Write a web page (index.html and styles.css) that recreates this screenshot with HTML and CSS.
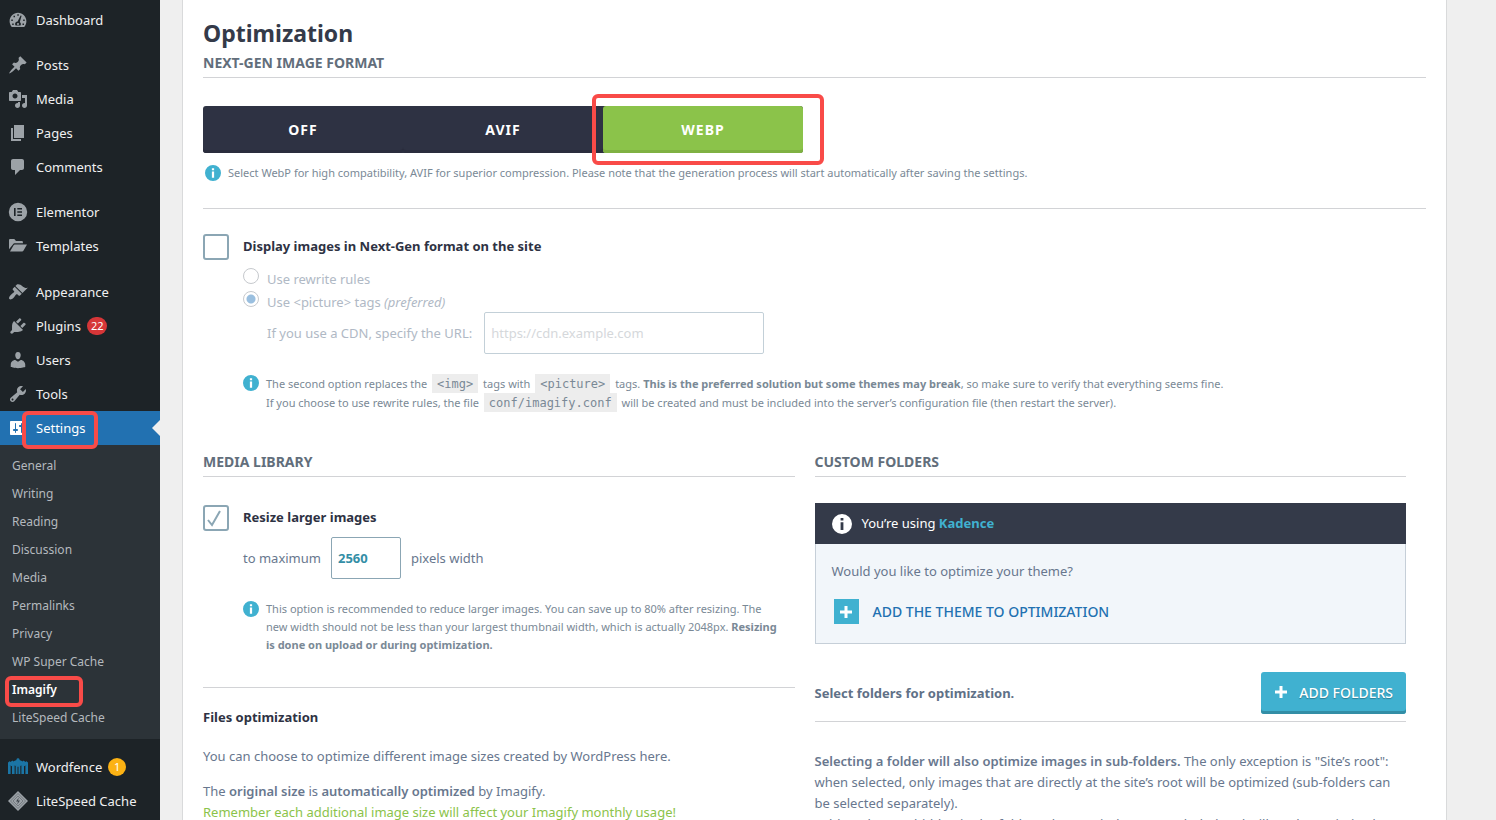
FILE: index.html
```html
<!DOCTYPE html>
<html lang="en">
<head>
<meta charset="utf-8">
<title>Imagify Settings</title>
<link rel="stylesheet" href="styles.css">
</head>
<body>
<svg class="sprite" aria-hidden="true">
  <symbol id="i-info" viewBox="0 0 20 20"><path fill-rule="evenodd" d="M10 0a10 10 0 1 0 0 20a10 10 0 0 0 0-20zM8.600 4h2.800v2.600H8.600zM8.600 8.200h2.800V16H8.600z"/></symbol>
  <symbol id="i-plus" viewBox="0 0 12 12"><path d="M4.500 0h3v4.500H12v3H7.500V12h-3V7.500H0v-3h4.500z"/></symbol>
</svg>
<div class="app">
  <nav class="sidebar" aria-label="Main menu">
    <ul class="menu">
      <li><a href="#"><svg viewBox="0 0 20 20"><path fill-rule="evenodd" d="M3.760 17h12.480c1.340-1.540 2.160-3.550 2.160-5.750C18.400 6.410 14.640 2.700 10 2.700S1.600 6.410 1.600 11.250c0 2.200.820 4.210 2.160 5.750zM9.300 4.200h1.500v1.500H9.300zM5.500 5.700H7v1.500H5.500zM3.300 9.500h1.500V11H3.300zM15.200 9.500h1.500V11h-1.500zM4.200 13.500h1.500V15H4.200zM14.500 13.500H16V15h-1.500zM13.600 5.800l-1.800 6.200c.700.500 1.100 1.200 1.100 2.100 0 .600-.200 1.100-.500 1.500H7.600c-.300-.400-.500-.900-.500-1.500 0-1.400 1.100-2.500 2.500-2.600l3-6.100zM10 13.100a1 1 0 1 0 0 2a1 1 0 0 0 0-2z"/></svg>Dashboard</a></li>
    </ul>
    <ul class="menu">
      <li><a href="#"><svg viewBox="0 0 20 20"><path d="M10.440 3.020l1.820-1.820 6.360 6.350-1.830 1.820c-1.050-.680-2.480-.570-3.410.360l-.750.750c-.920.930-1.040 2.350-.350 3.410l-1.830 1.820-2.410-2.410-2.800 2.790c-.420.420-3.380 2.710-3.800 2.290s1.860-3.390 2.280-3.810l2.790-2.790L4.100 9.360l1.830-1.820c1.050.690 2.480.570 3.400-.360l.750-.750c.930-.920 1.050-2.350.360-3.410z"/></svg>Posts</a></li>
      <li><a href="#"><svg viewBox="0 0 20 20"><path d="M13 11V4c0-.550-.450-1-1-1h-1.670L9 1H5L3.670 3H2c-.550 0-1 .450-1 1v7c0 .550.450 1 1 1h10c.550 0 1-.450 1-1zM7 4.500c1.380 0 2.500 1.120 2.500 2.500S8.380 9.500 7 9.500 4.500 8.380 4.500 7 5.620 4.500 7 4.500zM14 6h5v10.500c0 1.380-1.120 2.500-2.500 2.500S14 17.880 14 16.500s1.120-2.500 2.500-2.500c.170 0 .340.020.500.050V9h-3V6zm-4 8.050V13h2v3.500c0 1.380-1.120 2.500-2.500 2.500S7 17.880 7 16.500 8.120 14 9.500 14c.170 0 .340.020.500.050z"/></svg>Media</a></li>
      <li><a href="#"><svg viewBox="0 0 20 20"><path d="M6 15V2h10v13H6zm-1 1h8v2H3V5h2v11z"/></svg>Pages</a></li>
      <li><a href="#"><svg viewBox="0 0 20 20"><path d="M5 2h9c1.100 0 2 .900 2 2v7c0 1.100-.900 2-2 2h-2l-5 5v-5H5c-1.100 0-2-.900-2-2V4c0-1.100.900-2 2-2z"/></svg>Comments</a></li>
    </ul>
    <ul class="menu">
      <li><a href="#"><svg viewBox="0 0 20 20"><path fill-rule="evenodd" d="M10 .800a9.200 9.200 0 1 0 0 18.400a9.200 9.200 0 0 0 0-18.400zM6 6h1.600v8H6zM9.300 6H14v1.500H9.300zM9.300 9.200H14v1.500H9.300zM9.300 12.500H14V14H9.300z"/></svg>Elementor</a></li>
      <li><a href="#"><svg viewBox="0 0 20 20"><path d="M1 13.300V4.200c0-.800.500-1.300 1.300-1.300h4l1.700 2h5.700c.700 0 1.200.500 1.200 1.200v1.200H6.600c-.700 0-1.200.300-1.500.900zM2 15.600l3.600-6.400c.300-.500.700-.800 1.300-.800H19l-3.600 6.400c-.300.500-.700.800-1.300.800z"/></svg>Templates</a></li>
    </ul>
    <ul class="menu">
      <li><a href="#"><svg viewBox="0 0 20 20"><path d="M14.480 11.060L7.410 3.990l1.500-1.500c.500-.560 2.300-.470 3.510.320 1.210.800 1.430 1.280 2.910 2.100 1.180.640 2.450 1.260 4.450.850zm-.710.710L6.700 4.700 4.930 6.470c-.390.390-.390 1.020 0 1.410l1.060 1.060c.390.390.390 1.030 0 1.420-.600.600-1.430 1.110-2.210 1.690-.350.260-.700.530-1.010.840C1.430 14.230.400 16.080 1.400 17.070c.990 1 2.840-.030 4.180-1.360.310-.310.580-.660.850-1.020.570-.780 1.080-1.610 1.690-2.210.390-.390 1.020-.390 1.410 0l1.060 1.060c.390.390 1.020.390 1.410 0z"/></svg>Appearance</a></li>
      <li><a href="#"><svg viewBox="0 0 20 20"><path d="M13.110 4.360L9.870 7.600 8 5.730l3.240-3.240c.350-.340 1.050-.200 1.560.320.520.510.660 1.210.310 1.550zm-8 1.770l.910-1.120 9.010 9.010-1.190.840c-.710.710-2.630 1.160-3.820 1.160H6.140L4.900 17.260c-.590.590-1.540.590-2.120 0-.590-.580-.590-1.530 0-2.120l1.240-1.240v-3.880c0-1.130.400-3.190 1.090-3.890zm7.260 3.970l3.240-3.240c.340-.350 1.040-.210 1.550.310.520.510.660 1.210.310 1.550l-3.240 3.250z"/></svg>Plugins <span class="count count-red">22</span></a></li>
      <li><a href="#"><svg viewBox="0 0 20 20"><path d="M10 9.250c-2.270 0-2.730-3.440-2.730-3.440C7 4.020 7.820 2 9.970 2c2.160 0 2.980 2.020 2.710 3.810 0 0-.410 3.440-2.680 3.440zm0 2.570L12.720 10c2.390 0 4.520 2.330 4.520 4.530v2.490s-3.650 1.130-7.240 1.130c-3.650 0-7.240-1.130-7.240-1.130v-2.490c0-2.250 1.940-4.480 4.470-4.480z"/></svg>Users</a></li>
      <li><a href="#"><svg viewBox="0 0 20 20"><path d="M16.680 9.770c-1.340 1.340-3.300 1.670-4.950.990l-5.410 6.520c-.990.990-2.590.990-3.580 0s-.990-2.590 0-3.570l6.520-5.420c-.680-1.650-.350-3.610.990-4.950 1.280-1.280 3.120-1.620 4.720-1.060l-2.890 2.890 2.820 2.820 2.860-2.870c.530 1.580.180 3.390-1.080 4.650zM3.810 16.210c.400.390 1.040.390 1.430 0 .400-.400.400-1.040 0-1.430-.390-.400-1.030-.400-1.430 0-.390.390-.390 1.030 0 1.430z"/></svg>Tools</a></li>
      <li class="current"><a href="#"><svg viewBox="0 0 20 20"><path d="M18 16V4c0-.550-.450-1-1-1H3c-.550 0-1 .450-1 1v12c0 .550.450 1 1 1h14c.550 0 1-.450 1-1zM8 11h1c.550 0 1 .450 1 1s-.450 1-1 1H8v1.500c0 .280-.220.500-.500.500s-.500-.220-.500-.500V13H6c-.550 0-1-.450-1-1s.450-1 1-1h1V5.500c0-.280.220-.500.500-.500s.500.220.500.500V11zm5-2h-1c-.550 0-1-.450-1-1s.450-1 1-1h1V5.500c0-.280.220-.500.500-.500s.500.220.500.500V7h1c.550 0 1 .450 1 1s-.450 1-1 1h-1v5.500c0 .280-.220.500-.500.500s-.500-.220-.500-.500V9z"/></svg>Settings</a><span class="mark mark-settings"></span></li>
    </ul>
    <ul class="submenu">
      <li><a href="#">General</a></li>
      <li><a href="#">Writing</a></li>
      <li><a href="#">Reading</a></li>
      <li><a href="#">Discussion</a></li>
      <li><a href="#">Media</a></li>
      <li><a href="#">Permalinks</a></li>
      <li><a href="#">Privacy</a></li>
      <li><a href="#">WP Super Cache</a></li>
      <li class="active"><a href="#">Imagify</a><span class="mark mark-imagify"></span></li>
      <li><a href="#">LiteSpeed Cache</a></li>
    </ul>
    <ul class="menu">
      <li><a href="#"><svg class="wordfence" viewBox="0 0 20 20"><path d="M0 5.500L2 4v1l3-1.500v1L8.500 3V2L10 1l1.500 1v1L15 4.500v-1L18 5V4l2 1.500V8H0z"/><path d="M0 9h2.600v8H0zM4 9h2.600v8H4zM7.700 8.500h1.800V17H7.700zM10.500 8.500h1.800V17h-1.800zM13.400 9H16v8h-2.600zM17.400 9H20v8h-2.600zM0 7h20v2.500c-2-1.200-3.500-1-4.500.300-1-1.300-3-1.600-5.500-.100-2.500-1.500-4.500-1.200-5.500.100C3.500 8.500 2 8.300 0 9.500z"/></svg>Wordfence <span class="count count-amber">1</span></a></li>
      <li><a href="#"><svg viewBox="0 0 20 20"><path d="M10 0l10 10-10 10L0 10z"/><path class="facet" d="M10 2.500l7.500 7.500-7.500 7.500L2.500 10zM10 5l5 5-5 5-5-5z"/><path class="bolt" d="M10.800 6.500L8 10.500h2l-.800 3L12 9.500h-2z"/></svg>LiteSpeed Cache</a></li>
    </ul>
  </nav>

  <main class="content">
    <form class="panel">
      <h1>Optimization</h1>
      <h2>Next-Gen image format</h2>
      <div class="formats">
        <button type="button">Off</button>
        <button type="button">AVIF</button>
        <button type="button" class="selected">WebP</button>
        <span class="mark mark-webp"></span>
      </div>
      <p class="note format-note"><svg><use href="#i-info"/></svg><span>Select WebP for high compatibility, AVIF for superior compression. Please note that the generation process will start automatically after saving the settings.</span></p>

      <section class="option display-option">
        <input type="checkbox" id="nextgen">
        <div class="option-body">
          <label class="option-title" for="nextgen">Display images in Next-Gen format on the site</label>
          <div class="methods">
            <div class="radio-row"><input type="radio" name="method" id="rewrite" disabled><label for="rewrite">Use rewrite rules</label></div>
            <div class="radio-row"><input type="radio" name="method" id="picture" checked disabled><label for="picture">Use &lt;picture&gt; tags <em>(preferred)</em></label></div>
            <div class="cdn-row"><label for="cdn">If you use a CDN, specify the URL:</label><input type="text" id="cdn" placeholder="https://cdn.example.com" disabled></div>
          </div>
          <p class="note code-note"><svg><use href="#i-info"/></svg><span>The second option replaces the <code>&lt;img&gt;</code> tags with <code>&lt;picture&gt;</code> tags. <strong>This is the preferred solution but some themes may break</strong>, so make sure to verify that everything seems fine.<br>If you choose to use rewrite rules, the file <code>conf/imagify.conf</code> will be created and must be included into the server’s configuration file (then restart the server).</span></p>
        </div>
      </section>

      <div class="columns">
        <section>
          <h2>Media Library</h2>
          <div class="option resize-option">
            <input type="checkbox" id="resize" checked>
            <div class="option-body">
              <label class="option-title" for="resize">Resize larger images</label>
              <div class="size-row"><label for="width">to maximum</label><input type="text" id="width" value="2560"><span>pixels width</span></div>
              <p class="note resize-note"><svg><use href="#i-info"/></svg><span>This option is recommended to reduce larger images. You can save up to 80% after resizing. The new width should not be less than your largest thumbnail width, which is actually 2048px. <strong>Resizing is done on upload or during optimization.</strong></span></p>
            </div>
          </div>
          <div class="files">
            <h3>Files optimization</h3>
            <p class="intro">You can choose to optimize different image sizes created by WordPress here.</p>
            <p>The <strong>original size</strong> is <strong>automatically optimized</strong> by Imagify.<br><span class="reminder">Remember each additional image size will affect your Imagify monthly usage!</span></p>
          </div>
        </section>
        <section>
          <h2>Custom folders</h2>
          <div class="theme-box">
            <div class="theme-head"><svg><use href="#i-info"/></svg><span>You’re using <strong>Kadence</strong></span></div>
            <div class="theme-body">
              <p>Would you like to optimize your theme?</p>
              <button type="button" class="add-theme"><span class="plus-box"><svg><use href="#i-plus"/></svg></span>Add the theme to optimization</button>
            </div>
          </div>
          <div class="folders-row">
            <strong>Select folders for optimization.</strong>
            <button type="button" class="add-folders"><svg><use href="#i-plus"/></svg>Add folders</button>
          </div>
          <p class="folder-text"><strong>Selecting a folder will also optimize images in sub-folders.</strong> The only exception is "Site’s root": when selected, only images that are directly at the site’s root will be optimized (sub-folders can be selected separately).<br>Folders that are hidden in the folder selector window are excluded and will not be optimized even if a parent folder is selected.</p>
        </section>
      </div>
    </form>
  </main>
</div>
</body>
</html>
```
FILE: styles.css
```css
* { box-sizing: border-box; }
body {
  margin: 0;
  background: #efefef;
  color: #626e7b;
  font: 13px/21px "Segoe UI", "Noto Sans", sans-serif;
}
h1, h2, h3, p, ul { margin: 0; padding: 0; }
ul { list-style: none; }
a { color: inherit; text-decoration: none; }
button, input { font: inherit; margin: 0; }
button { border: 0; cursor: pointer; }
strong { font-weight: 600; }
.sprite { display: none; }
.app { display: flex; height: 100vh; overflow: hidden; }

/* Sidebar */
.sidebar { flex: 0 0 160px; background: #1d2327; padding-top: 3px; }
.menu { margin-bottom: 11px; color: #f0f0f1; }
.menu + .menu + .menu { margin-bottom: 12px; }
.menu li { position: relative; }
.menu a { display: flex; align-items: center; height: 34px; padding-left: 8px; }
.menu svg { width: 20px; height: 20px; margin-right: 8px; fill: #9ca2a7; }
.menu .wordfence { fill: #1b75a5; }
.menu .facet { fill: none; stroke: #6b7176; stroke-width: 0.8; }
.menu .bolt { fill: #3c434a; }
.menu .current { background: #2271b1; color: #fff; }
.menu .current svg { fill: #fff; }
.current::after {
  content: "";
  position: absolute;
  right: 0;
  top: 9px;
  border: 8px solid transparent;
  border-left: 0;
  border-right-color: #efefef;
}
.menu + .menu:has(.current) { margin-bottom: 0; }
.count {
  min-width: 18px;
  height: 18px;
  margin-left: 6px;
  padding: 0 4px;
  border-radius: 9px;
  color: #fff;
  font-size: 11px;
  line-height: 18px;
  text-align: center;
}
.count-red { background: #d63638; }
.count-amber { background: #fcb214; }
.submenu { background: #2c3338; margin-bottom: 11px; padding: 7px 0; color: #b4b9be; font-size: 12px; line-height: 28px; }
.submenu li { position: relative; padding-left: 12px; }
.submenu a { display: block; }
.submenu .active { color: #fff; font-weight: 600; }

/* Highlight frames over the controls */
.mark { position: absolute; border: 4px solid #f94b48; border-radius: 6px; pointer-events: none; z-index: 1; }
.mark-settings { left: 22px; top: 0; width: 76px; height: 38px; }
.mark-imagify { left: 5px; top: 0; width: 78px; height: 31px; }
.mark-webp { right: -21px; top: -12px; bottom: -12px; width: 232px; }

/* Panel */
.content { flex: 1; min-width: 0; padding: 0 49px 0 22px; }
.panel { min-height: 100%; padding: 17px 20px 0; background: #fff; border: solid #d9dadb; border-width: 0 1px; }
h1 { color: #343a49; font-size: 23px; line-height: 32px; font-weight: 700; }
h2 {
  padding: 4px 0;
  border-bottom: 1px solid #d2d3d6;
  color: #626e7b;
  font-size: 14px;
  line-height: 20px;
  font-weight: 700;
  text-transform: uppercase;
}
.formats { position: relative; display: flex; width: 600px; margin-top: 28px; border-radius: 3px; background: #2e3243; }
.formats button {
  flex: 1;
  height: 47px;
  border-radius: 3px;
  background: none;
  box-shadow: inset 0 -3px #2a2d3d;
  color: #fff;
  font-size: 14px;
  font-weight: 700;
  letter-spacing: 1px;
  text-transform: uppercase;
}
.formats .selected { background: #8bc34a; box-shadow: inset 0 -3px #7fb142; }

.note { display: flex; color: #7a8996; font-size: 11px; line-height: 18px; }
.note svg { flex: none; width: 16px; height: 16px; margin: 1px 7px 0 0; fill: #40b1d0; }
.note strong { font-weight: 700; }
.format-note { padding: 11px 2px 26px; border-bottom: 1px solid #d2d3d6; }
.code-note { line-height: 19px; }
.resize-note { padding-right: 12px; }
code { margin: 0 2px; padding: 3px 5px 2px; background: #ededed; font: 12px/14px "DejaVu Sans Mono", monospace; }

.option { display: flex; gap: 14px; }
.option-body { flex: 1; min-width: 0; }
.option-title { display: block; color: #2e3243; font-weight: 700; line-height: 24px; }
input[type="checkbox"] {
  appearance: none;
  flex: none;
  width: 26px;
  height: 26px;
  border: 2px solid #8ba6b4;
  border-radius: 3px;
  background: #fff;
}
input[type="checkbox"]:checked {
  background: url("data:image/svg+xml,%3Csvg xmlns='http://www.w3.org/2000/svg' viewBox='0 0 22 22'%3E%3Cpath d='M3 13l4 5 8-14' fill='none' stroke='%238ba6b4' stroke-width='2'/%3E%3C/svg%3E") no-repeat center / 22px 22px;
}
.display-option { padding: 25px 0 36px; }
.methods { padding: 9px 0 20px; color: #b0b9c5; }
.radio-row { display: flex; gap: 8px; height: 23px; }
.radio-row + .cdn-row { margin-top: -1px; }
.radio-row label { line-height: 25px; }
input[type="radio"] {
  appearance: none;
  width: 16px;
  height: 16px;
  margin-top: 1px;
  border: 1px solid #c6c9cd;
  border-radius: 50%;
  background: #fff;
}
input[type="radio"]:checked { background: radial-gradient(#9abfdf 4px, #fff 5px); }
.cdn-row { display: flex; align-items: center; gap: 12px; padding-left: 24px; }
input[type="text"] { height: 42px; padding: 0 6px; border: 1px solid #8ba6b4; border-radius: 2px; background: #fff; }
.cdn-row input { width: 280px; border-color: #c3d0d8; }
.cdn-row input::placeholder { color: #d5d8db; }

.columns { display: grid; grid-template-columns: 1fr 1fr; gap: 20px; padding-right: 20px; }
.resize-option { padding: 28px 0 33px; border-bottom: 1px solid #d2d3d6; }
.size-row { display: flex; align-items: center; gap: 10px; margin: 8px 0 21px; color: #68778e; }
.size-row input { width: 70px; color: #338ea6; font-weight: 700; }
.files { padding-top: 19px; color: #68778e; }
h3 { color: #2e3243; font-size: 13px; line-height: 21px; font-weight: 700; }
.intro { margin: 18px 0 14px; }
.reminder { color: #8bc34a; }

.theme-box { margin-top: 26px; border: 1px solid #c6cfd8; border-top: 0; background: #f2f6fa; }
.theme-head { display: flex; align-items: center; gap: 10px; height: 41px; margin: 0 -1px; padding-left: 17px; background: #343a49; color: #fff; }
.theme-head svg { width: 20px; height: 20px; fill: #fff; }
.theme-head strong { color: #40b1d0; font-weight: 700; }
.theme-body { padding: 17px 16px 19px; color: #68778e; }
.add-theme { display: flex; align-items: center; gap: 14px; margin-top: 17px; padding: 0 2px; background: none; color: #2271b1; font-size: 14px; font-weight: 500; text-transform: uppercase; }
.plus-box { display: grid; place-items: center; width: 25px; height: 25px; background: #40b1d0; }
.add-theme svg, .add-folders svg { width: 12px; height: 12px; fill: #fff; }
.folders-row { display: flex; align-items: center; justify-content: space-between; margin-top: 28px; padding-bottom: 7px; border-bottom: 1px solid #d2d3d6; color: #5f7187; }
.folders-row strong { font-weight: 700; }
.add-folders {
  display: flex;
  align-items: center;
  gap: 12px;
  height: 42px;
  padding: 0 13px 2px 14px;
  border-radius: 3px;
  background: #40b1d0;
  box-shadow: inset 0 -3px #338ea6;
  color: #fff;
  font-size: 14px;
  font-weight: 500;
  text-shadow: 0 1px 1px #2b7d94;
  text-transform: uppercase;
}
.folder-text { margin-top: 29px; color: #68778e; }
```
